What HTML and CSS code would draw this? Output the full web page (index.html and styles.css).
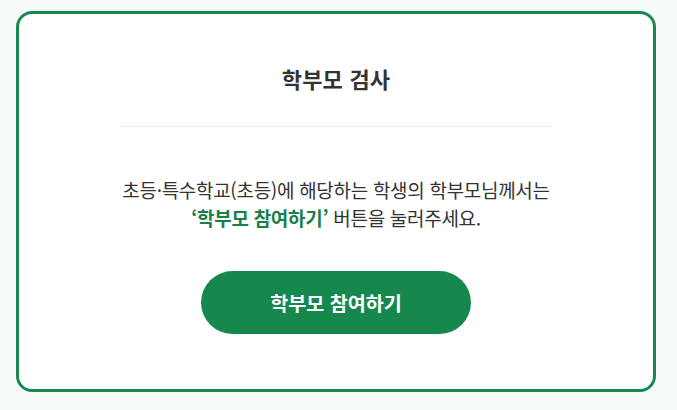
FILE: index.html
```html
<!DOCTYPE html>
<html lang="ko">
<head>
    <meta charset="UTF-8">
    <meta name="viewport" content="width=device-width, initial-scale=1.0">
    <title>학부모 검사</title>
    <link rel="stylesheet" href="styles.css">
</head>
<body>
    <!-- Parent survey card -->
    <div class="survey-card">
        <h2 class="survey-title">학부모 검사</h2>
        <hr class="survey-divider">
        <p class="survey-desc">
            초등·특수학교(초등)에 해당하는 학생의 학부모님께서는<br>
            <strong class="highlight">‘학부모 참여하기’</strong> 버튼을 눌러주세요.
        </p>
        <button class="join-button" type="button">학부모 참여하기</button>
    </div>
</body>
</html>
```

FILE: styles.css
```css
body {
    margin: 0;
    padding: 11px 22px 18px 16px;
    background-color: #f4fbf9;
    font-family: "Noto Sans CJK KR", "Noto Sans", sans-serif;
    color: #333;
}

.survey-card {
    box-sizing: border-box;
    width: 640px;
    height: 381px;
    border: 3px solid #1b8750;
    border-radius: 16px;
    background-color: #fff;
    display: flex;
    flex-direction: column;
    align-items: center;
    padding-top: 47px;
}

.survey-title {
    margin: 0;
    font-size: 22px;
    line-height: 34px;
    font-weight: 700;
    color: #333;
    letter-spacing: 0.2px;
}

.survey-divider {
    width: 432px;
    height: 1px;
    margin: 31px 0 0;
    border: 0;
    background-color: #ececec;
}

.survey-desc {
    margin: 49px 0 0;
    font-size: 19px;
    line-height: 28px;
    letter-spacing: -0.3px;
    text-align: center;
    color: #333;
}

.highlight {
    color: #1b7f4a;
    font-weight: 700;
}

.join-button {
    margin-top: 39px;
    width: 270px;
    height: 63px;
    border: 0;
    border-radius: 32px;
    background-color: #16874d;
    color: #fff;
    font-family: inherit;
    font-size: 19.6px;
    font-weight: 700;
    cursor: pointer;
}
```
